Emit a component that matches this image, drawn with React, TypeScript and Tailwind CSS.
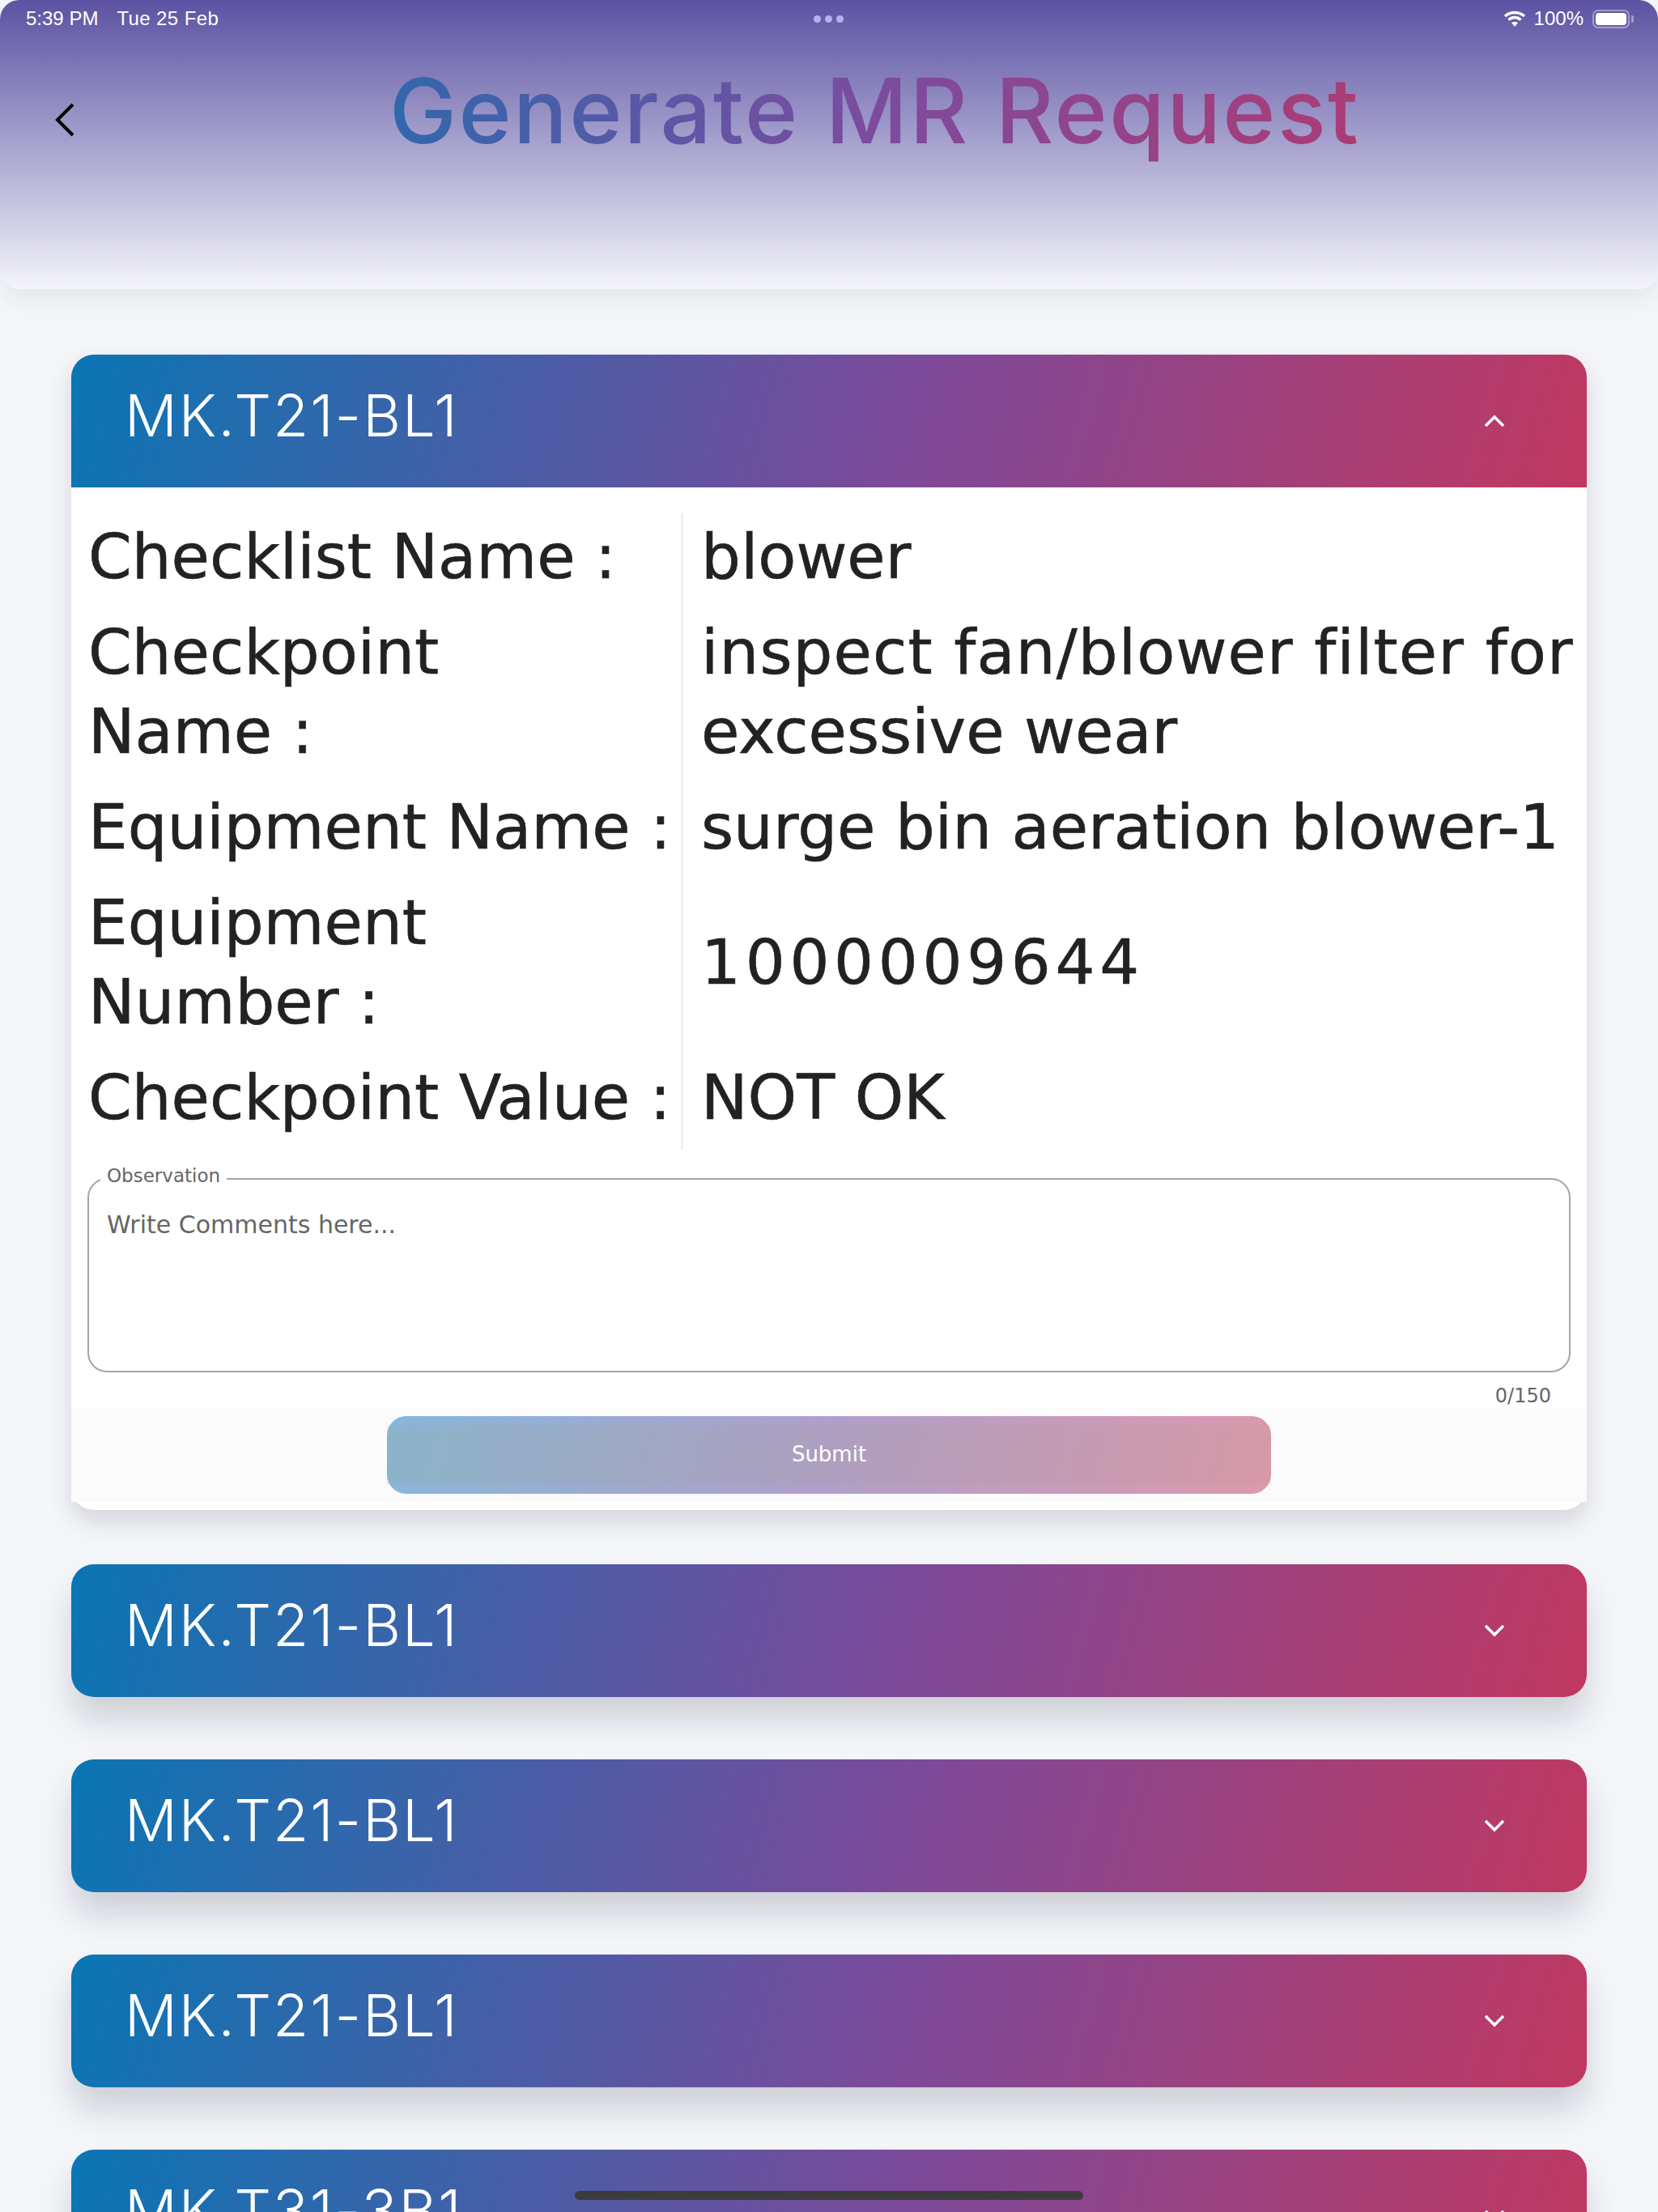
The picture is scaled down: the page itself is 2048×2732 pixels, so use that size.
import React from "react";

const grad = "bg-[linear-gradient(105deg,#0a76b4,#7b4a9b_54%,#c03860)]";

function Chevron({ up }: { up?: boolean }) {
  return (
    <svg width="28" height="20" viewBox="0 0 28 20" fill="none" className="mr-[100px]">
      <path d={up ? "M3 16L14 5L25 16" : "M3 4L14 15L25 4"} stroke="#fff" strokeWidth="3.5" />
    </svg>
  );
}

function Header({ title, up, shadow }: { title: string; up?: boolean; shadow?: boolean }) {
  return (
    <div
      className={`h-[164px] flex items-center justify-between ${grad} ${up ? "rounded-t-[28px]" : "rounded-[28px]"} ${shadow ? "shadow-[0_28px_40px_rgba(40,40,60,0.18)]" : ""}`}
    >
      <span className="ml-[66px] -mt-[14px] text-[72px] font-light tracking-[2px] text-white leading-none font-['Inter',sans-serif]">{title}</span>
      <Chevron up={up} />
    </div>
  );
}

const rows: [string, React.ReactNode, string, string][] = [
  ["Checklist Name :", "blower", "h-[118px]", ""],
  [
    "Checkpoint\nName :",
    <>
      <span className="block tracking-[1.1px] whitespace-nowrap">inspect fan/blower filter for</span>
      <span className="block">excessive wear</span>
    </>,
    "h-[216px]",
    "",
  ],
  ["Equipment Name :", "surge bin aeration blower-1", "h-[118px]", ""],
  ["Equipment\nNumber :", "1000009644", "h-[216px]", "tracking-[5.7px]"],
  ["Checkpoint Value :", "NOT OK", "h-[118px]", ""],
];

export default function App() {
  return (
    <div className="relative w-[2048px] h-[2732px] overflow-hidden bg-[#f4f6fa] font-['DejaVu_Sans',sans-serif]">
      <div className="relative h-[357px] rounded-[24px] bg-[linear-gradient(180deg,#5c52a2,#c5c3e0_70%,#f4f5fa)] shadow-[0_12px_30px_rgba(40,40,60,0.08)]">
        <div className="flex items-center justify-between h-[46px] pl-[32px] pr-[30px] text-[24px] text-white font-['Liberation_Sans',sans-serif]">
          <div className="flex gap-[23px]">
            <span>5:39 PM</span>
            <span className="tracking-[0.4px]">Tue 25 Feb</span>
          </div>
          <div className="flex items-center">
            <svg width="28" height="20" viewBox="0 0 28 20" fill="none">
              <path d="M2 7C9 1 19 1 26 7" stroke="#fff" strokeWidth="3.5" />
              <path d="M6.5 11.5C11 7.5 17 7.5 21.5 11.5" stroke="#fff" strokeWidth="3.5" />
              <path d="M10 15L14 20L18 15C16 13.5 12 13.5 10 15Z" fill="#fff" />
            </svg>
            <span className="ml-[10px]">100%</span>
            <div className="ml-[11px] w-[46px] h-[23px] rounded-[7px] border-2 border-white/40 p-[2px]">
              <div className="w-full h-full rounded-[4px] bg-white" />
            </div>
            <div className="ml-[2px] w-[3px] h-[9px] rounded-r-[2px] bg-white/40" />
          </div>
        </div>
        <div className="absolute left-[1005px] top-[19px] flex gap-[5px]">
          <i className="block w-[9px] h-[9px] rounded-full bg-[#b9aef0]" />
          <i className="block w-[9px] h-[9px] rounded-full bg-[#b9aef0]" />
          <i className="block w-[9px] h-[9px] rounded-full bg-[#b9aef0]" />
        </div>
        <div className="flex items-start">
          <svg width="30" height="44" viewBox="0 0 30 44" fill="none" className="ml-[64px] mt-[80px]">
            <path d="M26 3L7 22L26 41" stroke="#000" strokeWidth="4" />
          </svg>
          <h1 className="ml-[387px] mt-[26px] text-[111px] leading-[130px] font-medium tracking-[2.4px] whitespace-nowrap font-['Inter',sans-serif] bg-[linear-gradient(90deg,#3167ad,#7c4b9e_50%,#ab3c74)] bg-clip-text text-transparent">
            Generate MR Request
          </h1>
        </div>
      </div>

      <div className="flex flex-col gap-[77px] mx-[88px] mt-[81px]">
        <div className="-mb-[10px] rounded-[28px] bg-white shadow-[0_14px_30px_rgba(40,40,60,0.16)]">
          <Header title="MK.T21-BL1" up />
          <div className="flex flex-col ml-[21px] mr-[22px] mt-[32px] text-[77px] leading-[98px] text-[#222] [-webkit-text-stroke:0.6px_#222]">
            {rows.map(([k, v, h, t]) => (
              <div key={k} className={`flex items-center ${h}`}>
                <div className="w-[732px] pr-[4px] shrink-0 mb-[10px] whitespace-pre-line">{k}</div>
                <div className="self-stretch w-[3px] bg-[#f0f0f0] shrink-0" />
                <div className={`pl-[22px] mb-[10px] ${t}`}>{v}</div>
              </div>
            ))}
          </div>
          <div className="relative mx-[20px] mt-[35px] h-[240px] rounded-[24px] border-2 border-[#a5a5a5] px-[22px] pt-[33px] text-[30px] text-[#666]">
            <span className="absolute left-[14px] -top-[20px] px-[8px] bg-white text-[23px] leading-[30px]">Observation</span>
            Write Comments here...
          </div>
          <div className="flex justify-end pr-[44px] h-[44px] pt-[14px] items-center text-[24px] text-[#666]">0/150</div>
          <div className="flex justify-center h-[116px] pt-[10px] bg-[#fbfbfc] mb-[10px]">
            <div className="w-[1092px] h-[96px] rounded-[24px] flex items-center text-white text-[26px] bg-[linear-gradient(105deg,#86b8da,#b09fcb_50%,#df98ae)]">
              <div className="w-full h-[74px] pb-[2px] flex items-center justify-center bg-[#a8a080]/15">Submit</div>
            </div>
          </div>
        </div>
        <Header title="MK.T21-BL1" shadow />
        <Header title="MK.T21-BL1" shadow />
        <Header title="MK.T21-BL1" shadow />
        <Header title="MK.T31-3B1" shadow />
      </div>

      <div className="absolute left-[710px] top-[2706px] w-[628px] h-[11px] rounded-full bg-[#3c3c3c]" />
    </div>
  );
}
